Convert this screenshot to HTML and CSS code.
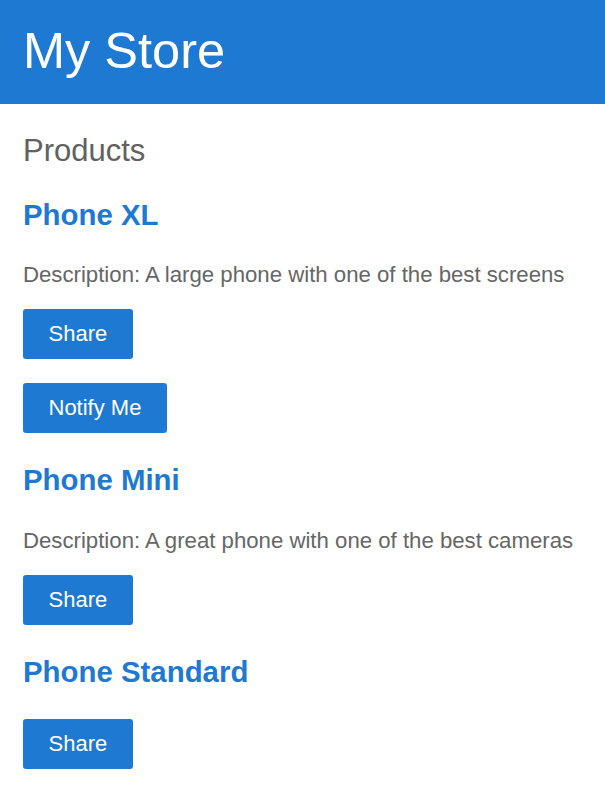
FILE: index.html
```html
<!DOCTYPE html>
<html lang="en">
<head>
<meta charset="utf-8">
<title>My Store</title>
<link rel="stylesheet" href="styles.css">
</head>
<body>
<header class="top-bar">
  <h1 class="brand">My Store</h1>
</header>
<main class="container">
  <h2 class="section-title">Products</h2>
  <div class="product">
    <h3 class="product-name">Phone XL</h3>
    <p class="product-desc">Description: A large phone with one of the best screens</p>
    <button class="btn">Share</button>
    <div class="alerts"><button class="btn">Notify Me</button></div>
  </div>
  <div class="product">
    <h3 class="product-name">Phone Mini</h3>
    <p class="product-desc">Description: A great phone with one of the best cameras</p>
    <button class="btn">Share</button>
  </div>
  <div class="product">
    <h3 class="product-name">Phone Standard</h3>
    <button class="btn">Share</button>
  </div>
</main>
</body>
</html>
```
FILE: styles.css
```css
* {
  box-sizing: border-box;
  font-family: "Liberation Sans", Arial, Helvetica, sans-serif;
}
body {
  margin: 0;
  background: #ffffff;
}
.top-bar {
  background: #1e79d2;
  height: 104px;
  padding: 21px 23px 0;
}
.brand {
  margin: 0;
  color: #ffffff;
  font-size: 50.5px;
  font-weight: normal;
  line-height: 60px;
}
.container {
  padding: 29px 23px 0;
}
.section-title {
  margin: 0 0 29px;
  color: #616161;
  font-size: 31px;
  font-weight: normal;
  line-height: 36px;
}
.product {
  display: flex;
  flex-direction: column;
  align-items: flex-start;
  margin-bottom: 30px;
}
.product-name {
  margin: 0 0 30px;
  color: #1e79d2;
  font-size: 29.4px;
  font-weight: bold;
  line-height: 34px;
}
.product-desc {
  margin: 0 0 21px;
  color: #666666;
  font-size: 22.2px;
  line-height: 26px;
}
.product + .product .product-desc {
  margin-top: 1px;
}
.btn {
  height: 50px;
  padding: 0 25.5px;
  border: none;
  border-radius: 3px;
  background: #1e79d2;
  color: #ffffff;
  font-size: 22px;
  line-height: 26px;
  cursor: pointer;
}
.alerts {
  margin-top: 24px;
}
```
